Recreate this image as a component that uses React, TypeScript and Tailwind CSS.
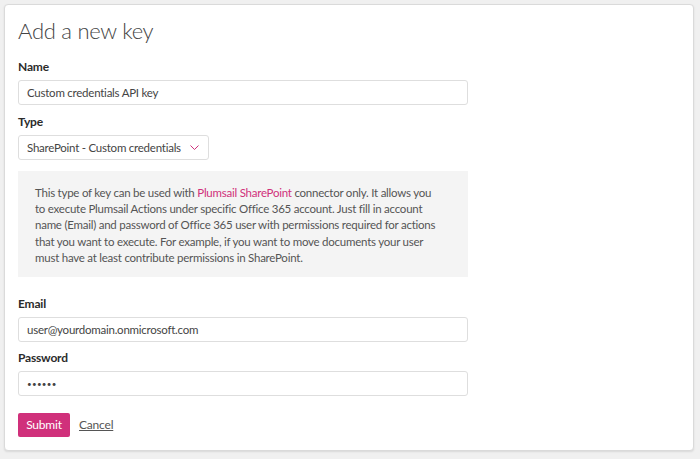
const font = { fontFamily: 'Lato, "Open Sans", sans-serif' };

function Label({ children }: { children: React.ReactNode }) {
  return (
    <label className="block h-[17px] mb-[5px] text-[12px] leading-[17px] font-bold text-[#2b2b2b] tracking-[-0.2px]">
      {children}
    </label>
  );
}

function TextInput({ value, dots }: { value: string; dots?: boolean }) {
  return (
    <input
      readOnly
      value={value}
      className={
        dots
          ? 'block w-[450px] h-[25px] px-[8px] text-[8px] tracking-[0.3px] text-[#444] border border-[#dedede] rounded-[3px] bg-white outline-none'
          : 'block w-[450px] h-[25px] px-[8px] text-[11.5px] tracking-[-0.24px] text-[#444] border border-[#dedede] rounded-[3px] bg-white outline-none'
      }
    />
  );
}

export default function App() {
  return (
    <div className="min-h-screen bg-[#f0f0f0] pt-[4px] pl-[4px] pr-[6px]" style={font}>
      <div className="h-[447px] bg-white border border-[#dadada] rounded-[4px] shadow-[0_1px_2px_rgba(0,0,0,0.1)] px-[13px] pt-[11px]">
        <h1 className="h-[30px] mb-[12px] text-[22px] leading-[30px] font-light text-[#444] tracking-[-0.27px]">
          Add a new key
        </h1>

        <Label>Name</Label>
        <TextInput value="Custom credentials API key" />

        <div className="mt-[8px]">
          <Label>Type</Label>
          <div className="flex items-center w-[191px] h-[25px] pl-[8px] pr-[9px] border border-[#dedede] rounded-[3px] text-[11.5px] tracking-[-0.24px] text-[#444]">
            <span className="flex-1 whitespace-nowrap">SharePoint - Custom credentials</span>
            <svg width="9" height="5" viewBox="0 0 9 5" fill="none" stroke="#d0307b" strokeWidth="1">
              <path d="M0.5 0.5 L4.5 4.5 L8.5 0.5" />
            </svg>
          </div>
        </div>

        <div className="mt-[11px] w-[450px] bg-[#f4f4f4] pl-[17px] pr-[10px] pt-[14px] pb-[11px] text-[11.5px] leading-[16.2px] tracking-[-0.24px] text-[#555] whitespace-nowrap">
          This type of key can be used with <span className="text-[#d0307b]">Plumsail SharePoint</span> connector only. It allows you
          <br />
          to execute Plumsail Actions under specific Office 365 account. Just fill in account
          <br />
          name (Email) and password of Office 365 user with permissions required for actions
          <br />
          that you want to execute. For example, if you want to move documents your user
          <br />
          must have at least contribute permissions in SharePoint.
        </div>

        <div className="mt-[18px]">
          <Label>Email</Label>
          <TextInput value="user@yourdomain.onmicrosoft.com" />
        </div>

        <div className="mt-[7px]">
          <Label>Password</Label>
          <TextInput value="••••••" dots />
        </div>

        <div className="mt-[17px] flex items-center gap-[9px]">
          <button className="h-[24px] w-[52px] bg-[#d0307b] text-white text-[12px] tracking-[-0.2px] rounded-[2px]">
            Submit
          </button>
          <a href="#" className="text-[12px] tracking-[-0.2px] text-[#555] underline">
            Cancel
          </a>
        </div>
      </div>
    </div>
  );
}
